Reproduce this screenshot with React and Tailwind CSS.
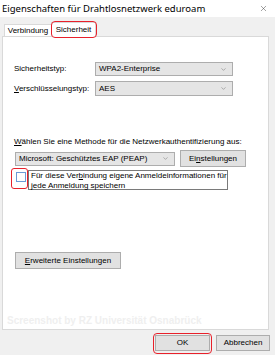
import { ChevronDown, X } from 'lucide-react'

const font = { fontFamily: '"Liberation Sans", Arial, sans-serif' }

function Select({ value, className }) {
  return (
    <div className={`flex items-center justify-between bg-[#e5e5e5] border border-[#adadad] pl-[3px] pr-[5px] text-[8px] text-black ${className}`}>
      <span>{value}</span>
      <ChevronDown className="w-[7px] h-[7px] text-[#606060]" strokeWidth={1.5} />
    </div>
  )
}

function Button({ children, className }) {
  return (
    <div className={`flex items-center justify-center bg-[#e1e1e1] border border-[#adadad] text-[8px] text-black ${className}`}>
      {children}
    </div>
  )
}

export default function App() {
  return (
    <div className="w-[275px] h-[355px] bg-[#f0f0f0] flex flex-col overflow-hidden text-black" style={font}>
      {/* title bar */}
      <div className="h-[17px] bg-white flex items-center justify-between pl-[2px] pr-[7px]">
        <span className="text-[9.5px] leading-none font-['Noto_Sans',sans-serif]">Eigenschaften für Drahtlosnetzwerk eduroam</span>
        <X className="w-[9px] h-[9px] text-[#333]" strokeWidth={1.2} />
      </div>

      {/* tabs */}
      <div className="h-[19px] flex items-end pl-[4px]">
        <div className="h-[12px] w-[47px] bg-white border-t border-l border-[#d9d9d9] flex items-center justify-center text-[8px]">
          Verbindung
        </div>
        <div className="relative h-[15px] w-[45px] -mb-px z-10 bg-white border-t border-l border-r border-[#d9d9d9] flex items-start justify-center pt-[1px] text-[8px]">
          Sicherheit
          <div className="absolute -left-[1px] -top-[2px] w-[46px] h-[17px] border-[1.5px] border-[#e8212b] rounded-[4px]" />
        </div>
      </div>

      {/* panel */}
      <div className="ml-[2px] w-[267px] h-[294px] bg-white border border-[#d9d9d9] flex flex-col text-[8px]">
        <div className="mt-[25px] flex items-center">
          <span className="w-[92px] pl-[11px]">Sicherheitstyp:</span>
          <Select value="WPA2-Enterprise" className="w-[138px] h-[14px]" />
        </div>
        <div className="mt-[5px] flex items-center">
          <span className="w-[92px] pl-[11px]"><u>V</u>erschlüsselungstyp:</span>
          <Select value="AES" className="w-[138px] h-[15px]" />
        </div>

        <div className="mt-[42px] pl-[11px] leading-none whitespace-nowrap"><u>W</u>ählen Sie eine Methode für die Netzwerkauthentifizierung aus:</div>
        <div className="mt-[4px] pl-[12px] flex items-center">
          <Select value="Microsoft: Geschütztes EAP (PEAP)" className="w-[160px] h-[14px]" />
          <Button className="ml-[5px] w-[66px] h-[17px]">Ei<u>n</u>stellungen</Button>
        </div>

        <div className="mt-[3px] pl-[13px] flex items-start">
          <div className="relative mt-[2px] w-[11px] h-[11px]">
            <div className="w-[10px] h-[10px] border border-[#6b9bd6] bg-white" />
            <div className="absolute -left-[5px] -top-[4px] w-[17px] h-[21px] border-[1.5px] border-[#e8212b] rounded-[3px]" />
          </div>
          <div className="ml-[1px] w-[200px] h-[20px] border border-[#7a7a7a] pl-[2px] leading-[9.5px]">
            Für diese Ver<u>b</u>indung eigene Anmeldeinformationen für jede Anmeldung speichern
          </div>
        </div>

        <Button className="mt-[62px] ml-[12px] w-[106px] h-[17px]"><u>E</u>rweiterte Einstellungen</Button>

        <div className="mt-[44px] pl-[4px] text-[10px] font-bold text-[#efefef]">Screenshot by RZ Universität Osnabrück</div>
      </div>

      {/* footer */}
      <div className="mt-[5px] flex justify-end pr-[5px] gap-[6px]">
        <div className="relative">
          <Button className="w-[55px] h-[16px] border-[#0078d7]">OK</Button>
          <div className="absolute -left-[2px] -top-[2px] w-[59px] h-[21px] border-[1.5px] border-[#e8212b] rounded-[4px]" />
        </div>
        <Button className="w-[54px] h-[16px]">Abbrechen</Button>
      </div>
    </div>
  )
}
